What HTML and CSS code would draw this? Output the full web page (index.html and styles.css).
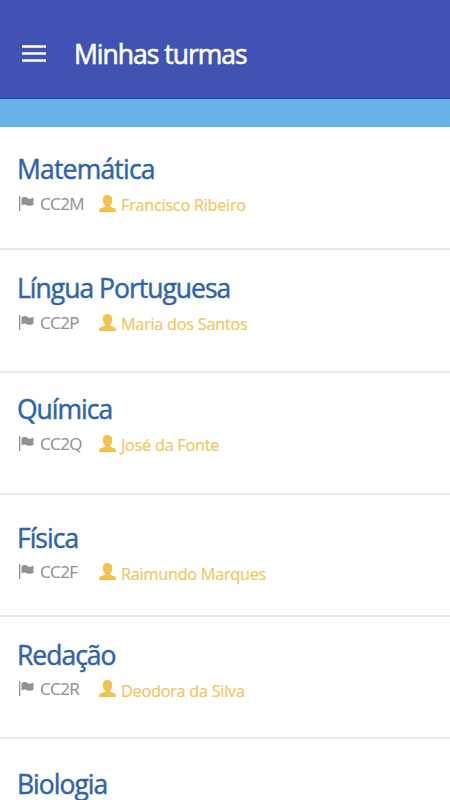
FILE: index.html
```html
<!DOCTYPE html>
<html lang="pt-BR">
<head>
<meta charset="utf-8">
<title>Minhas turmas</title>
<link rel="stylesheet" href="styles.css">
</head>
<body>
<svg class="defs" aria-hidden="true">
  <symbol id="flag" viewBox="0 0 15 15"><path d="M0 0h1.300v15H0z M2.500 2C5 .4 7.500 1.300 9 2.200c2 1 4 .3 5.500-.4v7c-2 1.300-4.500 1.300-6.500.4C6 8.400 4.500 8.400 2.500 9.400z"/></symbol>
  <symbol id="user" viewBox="0 0 17 17"><path d="M8.500 0c3 0 4.700 2 4.700 4.900 0 2.300-1 4.300-2.200 5.400v1.500l4.400 1.500c1.200.5 1.600 1.300 1.600 3.700H0c0-2.400.4-3.200 1.600-3.700L6 11.800v-1.500C4.800 9.200 3.800 7.200 3.800 4.900 3.800 2 5.500 0 8.500 0z"/></symbol>
</svg>
<header class="bar">
  <svg class="menu" viewBox="0 0 24 18"><path d="M0 1.500h24M0 8.500h24M0 15.500h24"/></svg>
  <h1>Minhas turmas</h1>
</header>
<div class="strip"></div>
<main>
  <section class="item i1"><h2>Matemática</h2><p><svg class="flag"><use href="#flag"/></svg><span class="code">CC2M</span><svg class="user"><use href="#user"/></svg><span class="name">Francisco Ribeiro</span></p></section>
  <section class="item i2"><h2>Língua Portuguesa</h2><p><svg class="flag"><use href="#flag"/></svg><span class="code">CC2P</span><svg class="user"><use href="#user"/></svg><span class="name">Maria dos Santos</span></p></section>
  <section class="item i3"><h2>Química</h2><p><svg class="flag"><use href="#flag"/></svg><span class="code">CC2Q</span><svg class="user"><use href="#user"/></svg><span class="name">José da Fonte</span></p></section>
  <section class="item i4"><h2>Física</h2><p><svg class="flag"><use href="#flag"/></svg><span class="code">CC2F</span><svg class="user"><use href="#user"/></svg><span class="name">Raimundo Marques</span></p></section>
  <section class="item i5"><h2>Redação</h2><p><svg class="flag"><use href="#flag"/></svg><span class="code">CC2R</span><svg class="user"><use href="#user"/></svg><span class="name">Deodora da Silva</span></p></section>
  <section class="item i6"><h2>Biologia</h2></section>
</main>
</body>
</html>
```

FILE: styles.css
```css
* { box-sizing: border-box; margin: 0; padding: 0; }
body { height: 800px; overflow: hidden; background: #fff; font-family: "Open Sans", sans-serif; }
.defs { display: none; }
.bar { display: flex; align-items: center; height: 99px; padding: 10px 22px 0; background: #4053b2; border-bottom: 1px solid #2c409c; }
.menu { width: 24px; height: 18px; margin-right: 28px; stroke: #fff; stroke-width: 2.4; }
h1, h2 { font-size: 26.5px; font-weight: 400; line-height: 36px; letter-spacing: -1px; -webkit-text-stroke: .45px currentColor; }
h1 { color: #fff; -webkit-text-stroke-width: .6px; }
.strip { height: 28px; background: #68b2ec; }
.item { height: 122px; padding: 0 17px; border-bottom: 2px solid #e8e8ea; }
.i1 { height: 123px; padding-top: 24px; }
.i2 { height: 123px; padding-top: 20px; }
.i3 { padding-top: 18px; }
.i4 { padding-top: 25px; }
.i5 { padding-top: 20px; }
.i6 { height: 61px; padding-top: 27px; border: 0; }
h2 { color: #2f62b0; }
.i1 h2 { letter-spacing: -.8px; }
p { display: flex; align-items: center; height: 33px; font-size: 16.3px; line-height: 22px; letter-spacing: -.27px; }
.i4 p, .i5 p { height: 31px; }
.flag { width: 15px; height: 15px; margin: 0 6px 0 2px; fill: #929292; }
.code { width: 59px; color: #929292; font-size: 17px; letter-spacing: -.6px; -webkit-text-stroke: .1px currentColor; }
.user { width: 17px; height: 17px; margin-right: 5px; fill: #f3c24a; }
.name { padding-top: 2px; color: #f1c65c; -webkit-text-stroke: .2px currentColor; }
.i4 .name, .i5 .name { padding-top: 5px; }
```
